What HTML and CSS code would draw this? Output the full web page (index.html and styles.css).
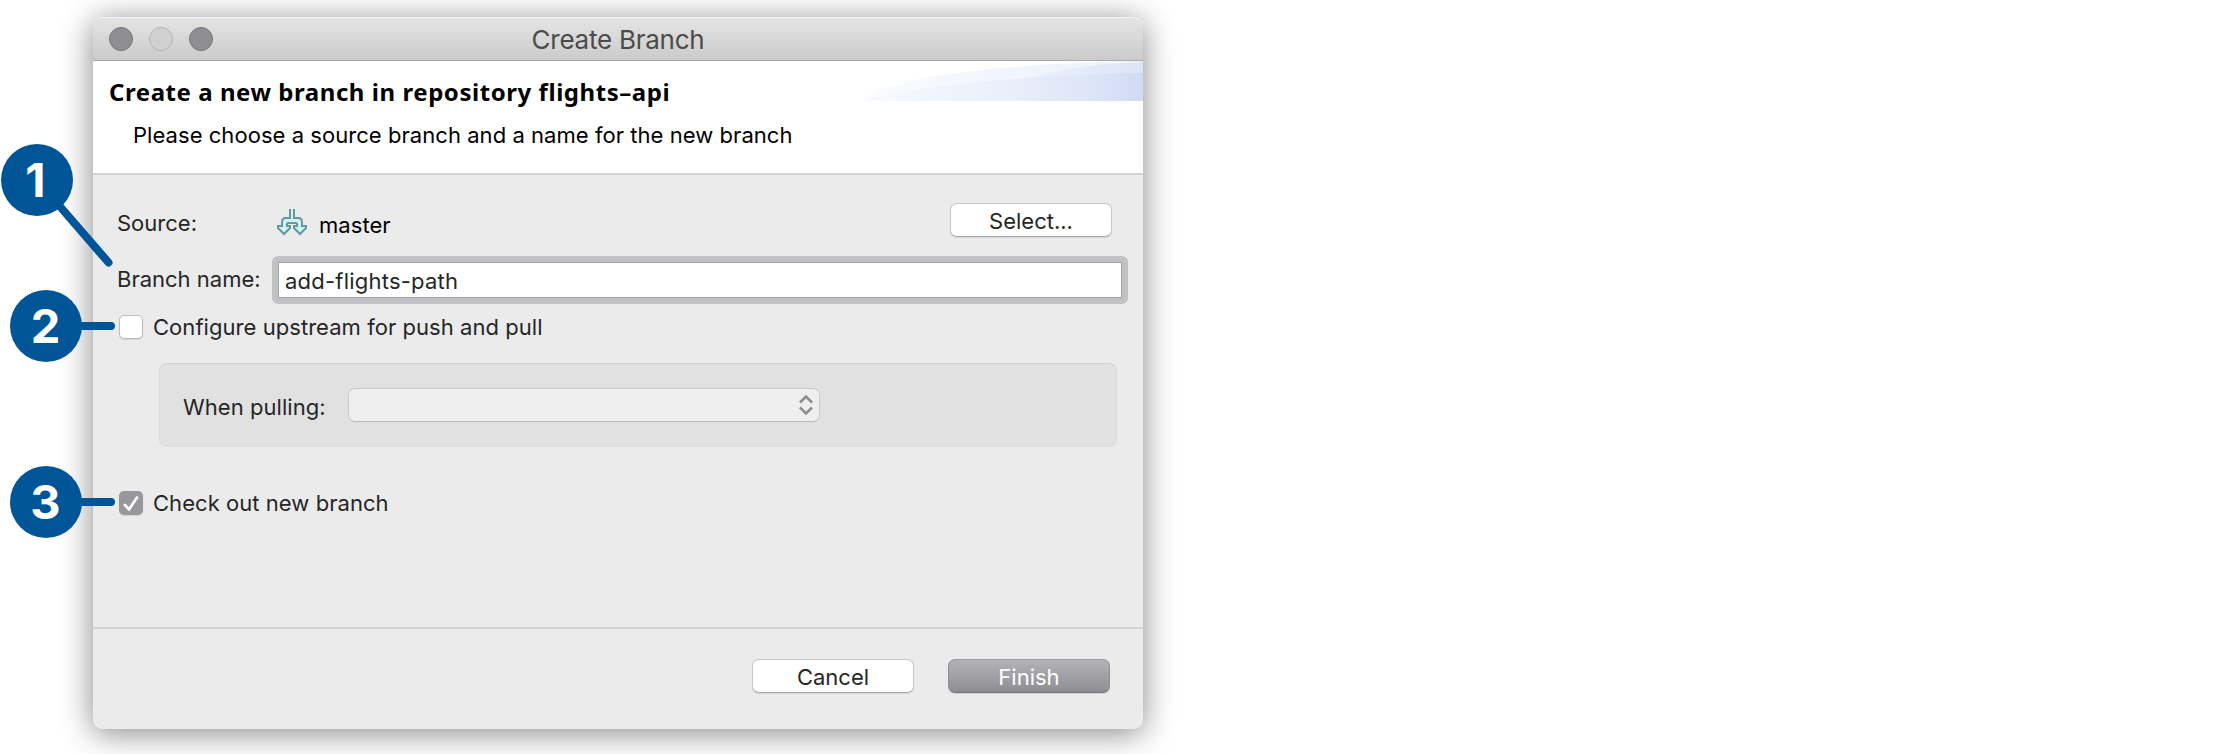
FILE: index.html
```html
<!DOCTYPE html>
<html lang="en">
<head>
<meta charset="utf-8">
<title>Create Branch</title>
<link rel="stylesheet" href="styles.css">
</head>
<body>
<main class="stage">
  <section class="dialog">
    <header class="titlebar">
      <div class="lights"><i class="light"></i><i class="light light-off"></i><i class="light"></i></div>
      <span class="title">Create Branch</span>
    </header>
    <div class="banner">
      <div class="banner-text">
        <h1 class="heading">Create a new branch in repository <span class="repo">flights–api</span></h1>
        <p class="subheading">Please choose a source branch and a name for the new branch</p>
      </div>
      <svg class="swoosh" width="280" height="40" viewBox="0 0 280 40">
        <defs>
          <linearGradient id="pale"><stop offset="0" stop-color="#fafcff"/><stop offset=".5" stop-color="#f1f5fd"/><stop offset="1" stop-color="#edf2fc"/></linearGradient>
          <linearGradient id="mid"><stop offset="0" stop-color="#eef3fc"/><stop offset="1" stop-color="#dbe4f7"/></linearGradient>
          <linearGradient id="deep"><stop offset="0" stop-color="#f8fafe"/><stop offset=".5" stop-color="#ebeffa"/><stop offset=".8" stop-color="#dde6f7"/><stop offset="1" stop-color="#d0daf4"/></linearGradient>
        </defs>
        <path d="M0 40C10 19 130 2 280 0V40Z" fill="url(#pale)"/>
        <path d="M150 22C185 9 230 3 280 1V40H150Z" fill="url(#mid)"/>
        <path d="M0 40C60 24 160 14 280 12V40Z" fill="url(#deep)"/>
      </svg>
    </div>
    <div class="body">
      <div class="row source-row">
        <span class="label source-label">Source:</span>
        <svg class="branch-icon" width="32" height="28" viewBox="0 0 32 28">
          <path d="M14 0V9H10Q6 9 6 13V17H2V19L8 25L14 19V17H11V15Q11 14 12 14H20Q21 14 21 15V17H18V19L24 25L30 19V17H26V13Q26 9 22 9H18V0" fill="#cff3f4" stroke="#65999b" stroke-width="2"/>
        </svg>
        <span class="master">master</span>
        <button class="button select-button"><span>Select...</span></button>
      </div>
      <div class="row name-row">
        <label class="label name-label">Branch name:</label>
        <div class="field"><span class="field-text">add-flights-path</span></div>
      </div>
      <div class="row check-row">
        <i class="checkbox"></i><span class="label check-label">Configure upstream for push and pull</span>
      </div>
      <div class="group">
        <span class="label pulling-label">When pulling:</span>
        <div class="combo">
          <svg width="16" height="22" viewBox="0 0 16 22" fill="none" stroke="#8d8d8d" stroke-width="2.5"><path d="M2 8.5L8 2.5L14 8.5M2 13.5L8 19.5L14 13.5"/></svg>
        </div>
      </div>
      <div class="row check-row checkout-row">
        <i class="checkbox checked"><svg width="24" height="24" viewBox="0 0 24 24"><path d="M6 14L10 18.5L18 6.5" fill="none" stroke="#fff" stroke-width="2.7" stroke-linecap="round" stroke-linejoin="round"/></svg></i><span class="label">Check out new branch</span>
      </div>
    </div>
    <footer class="footer">
      <button class="button"><span>Cancel</span></button>
      <button class="button primary"><span>Finish</span></button>
    </footer>
  </section>
  <svg class="callouts" width="130" height="560" viewBox="0 0 130 560">
    <g stroke="#005596" stroke-width="8" stroke-linecap="round"><path d="M37 180L108.500 262.500M46 326H111M46 502H111"/></g>
    <g fill="#005596"><circle cx="37" cy="180" r="36"/><circle cx="46" cy="326" r="36"/><circle cx="46" cy="502" r="36"/></g>
    <g class="numerals"><text x="35.500" y="197">1</text><text x="45.500" y="343">2</text><text x="45.500" y="519">3</text></g>
  </svg>
</main>
</body>
</html>
```
FILE: styles.css
```css
* { box-sizing: border-box; }
body { margin: 0; background: #fff; font-family: Inter, "Liberation Sans", sans-serif; font-size: 22px; line-height: 28px; letter-spacing: .05px; color: #262626; }
.stage { position: relative; width: 2234px; height: 754px; padding: 17px 0 0 93px; overflow: hidden; }
.dialog { width: 1050px; height: 712px; display: flex; flex-direction: column; border-radius: 9px; background: #ebebeb; box-shadow: 0 4px 32px rgba(0,0,0,.48); }
.titlebar { height: 44px; display: grid; grid-template-columns: 200px 1fr 200px; align-items: center; border-radius: 9px 9px 0 0; background: linear-gradient(#e4e4e4, #cbcbcb); border-top: 1px solid #f3f3f3; border-bottom: 1px solid #a9a9a9; }
.lights { display: flex; gap: 16px; padding-left: 16px; }
.light { width: 24px; height: 24px; border-radius: 50%; background: #8f8e93; border: 1px solid #77767b; }
.light-off { background: #d1d1d1; border-color: #b4b4b4; }
.title { padding-top: 2px; text-align: center; font-size: 26px; line-height: 38px; color: #4b4b4b; letter-spacing: -.25px; }
.banner { height: 114px; display: flex; justify-content: space-between; background: #fff; border-bottom: 2px solid #d3d3d3; color: #000; }
.banner-text { padding: 15px 0 0 16px; white-space: nowrap; }
.heading { margin: 0; font: bold 24px/32px "Noto Sans", sans-serif; letter-spacing: .55px; }
.subheading { margin: 13px 0 0 24px; line-height: 28px; }
.swoosh { flex: none; }
.body { height: 454px; border-bottom: 2px solid #d3d3d3; }
.row { display: flex; }
.label { white-space: nowrap; }
.source-row { height: 81px; padding: 28px 31px 0 24px; }
.source-label { width: 159px; padding-top: 6px; letter-spacing: 0; }
.branch-icon { margin-top: 6px; }
.master { margin-left: 11px; padding-top: 8px; color: #000; }
.button { width: 162px; height: 34px; display: flex; align-items: center; justify-content: center; padding: 1px 0 0; border: 1px solid #c6c6c6; border-bottom-color: #aaa; border-radius: 7px; background: #fff; box-shadow: 0 1px 1px rgba(0,0,0,.1); font: inherit; color: #262626; }
.select-button { margin-left: auto; }
.name-row { height: 48px; padding: 0 15px 0 24px; }
.name-label { width: 155px; padding-top: 9px; letter-spacing: 0; }
.field { flex: 1; height: 48px; border: 6px solid #c2c2c4; border-radius: 6px; background: #fff; box-shadow: inset 0 0 0 1px #a2a2a4; padding: 5px 7px; line-height: 28px; letter-spacing: .22px; color: #262626; }
.check-row { align-items: center; gap: 10px; padding-left: 26px; }
.name-row + .check-row { padding-top: 11px; height: 35px; }
.checkbox { width: 24px; height: 24px; border: 1px solid #bcbcbc; border-radius: 5px; background: #fff; box-shadow: 0 1px 1px rgba(0,0,0,.1); }
.checked { border: 0; background: #98979c; }
.checked svg { display: block; }
.group { height: 84px; margin: 24px 26px 0 66px; padding: 0 0 0 23px; display: flex; align-items: center; border: 1px solid #dadada; border-top-color: #d0d0d0; border-radius: 8px; background: #e1e1e1; }
.pulling-label { width: 165px; padding-top: 4px; }
.combo { width: 472px; height: 34px; padding-right: 5px; display: flex; align-items: center; justify-content: flex-end; border: 1px solid #cbcbcb; border-bottom-color: #b9b9b9; border-radius: 7px; background: #efefef; }
.checkout-row { margin-top: 42px; }
.footer { display: flex; justify-content: flex-end; gap: 34px; padding: 30px 33px 0 0; }
.primary { border-color: #99989e #8e8d93 #77767c; background: linear-gradient(#b3b2b7, #8e8d92); color: #fff; }
.callouts { position: absolute; left: 0; top: 0; }
.numerals { fill: #fff; font: bold 47px Inter, sans-serif; text-anchor: middle; }
```
